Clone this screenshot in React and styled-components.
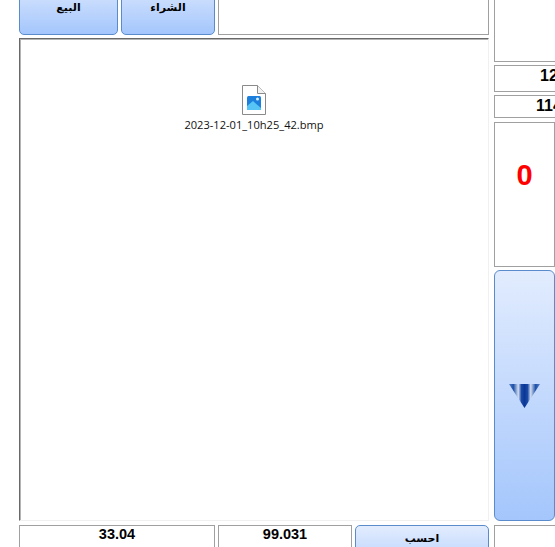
import React from "react"
import styled, { createGlobalStyle } from "styled-components"

const Global = createGlobalStyle`
    html, body {
        margin: 0;
        padding: 0;
        background: #ffffff;
        overflow: hidden;
    }
    * {
        box-sizing: border-box;
    }
`
const Viewport = styled.div`
    width: 555px;
    height: 547px;
    overflow: hidden;
`
const Page = styled.div`
    display: grid;
    grid-template-columns: 470px 61px;
    column-gap: 5px;
    margin-top: -25px;
    padding-left: 19px;
    font-family: "Liberation Sans", Arial, sans-serif;
`
const LeftColumn = styled.div`
    display: flex;
    flex-direction: column;
`
const RightColumn = styled.div`
    display: flex;
    flex-direction: column;
    width: 61px;
`
const TopRow = styled.div`
    display: grid;
    grid-template-columns: 99px 94px 271px;
    column-gap: 3px;
    height: 60px;
`
const BottomRow = styled.div`
    display: grid;
    grid-template-columns: 196px 134px 134px;
    column-gap: 3px;
    height: 60px;
    margin-top: 4px;
`
const GlossButton = styled.button`
    display: flex;
    justify-content: center;
    align-items: flex-start;
    padding: ${(p) => p.$pad || 0}px 0 0;
    border: 1px solid #5a8ccb;
    border-radius: 5px;
    background: linear-gradient(#e2ecfe, #a4c6fc);
    color: #000000;
    font-family: "DejaVu Sans", "Noto Sans", sans-serif;
    font-size: 11px;
    font-weight: 700;
    line-height: 16px;
`
const Cell = styled.div`
    border: 1px solid #a0a0a0;
    background: #ffffff;
    text-align: center;
    font-weight: 700;
    color: #000000;
`
const ValueCell = styled(Cell)`
    font-size: 14.5px;
    line-height: 17px;
`
const Desktop = styled.div`
    display: flex;
    justify-content: center;
    height: 483px;
    margin-top: 3px;
    padding: 46px 0 0 0;
    border-style: solid;
    border-width: 1px;
    border-color: #696969 #f0f0f0 #f0f0f0 #696969;
    box-shadow: inset 1px 1px 0 #b4b4b4;
    background: #ffffff;
`
const FileItem = styled.div`
    display: flex;
    flex-direction: column;
    align-items: center;
    gap: 2px;
    height: 60px;
`
const FileName = styled.span`
    font-family: "Open Sans", "Noto Sans", sans-serif;
    font-size: 11.1px;
    line-height: 15px;
    color: #111111;
    white-space: nowrap;
`
const SideBox = styled.div`
    flex: none;
    width: ${(p) => p.$w || 110}px;
    height: ${(p) => p.$h}px;
    margin-top: ${(p) => p.$gap || 0}px;
    border: 1px solid #a0a0a0;
    background: #ffffff;
    text-align: center;
    font-size: 16px;
    font-weight: 700;
    line-height: 20px;
    color: #000000;
`
const ZeroBox = styled(SideBox)`
    display: flex;
    justify-content: center;
    align-items: center;
    padding-bottom: 39px;
    font-size: 29px;
    color: #ff0000;
`
const DownButton = styled.button`
    flex: none;
    display: flex;
    justify-content: center;
    align-items: flex-start;
    width: 61px;
    height: 251px;
    margin-top: 3px;
    padding: 113px 0 0;
    border: 1px solid #5a8ccb;
    border-radius: 6px;
    background: linear-gradient(#e2ecfe, #a4c6fc);
`

const FileIcon = () => (
    <svg width="24" height="30" viewBox="0 0 24 30">
        <path d="M0.5 0.5H15.5L23.5 8.5V29.5H0.5Z" fill="#ffffff" stroke="#8a8a8a" />
        <path d="M15.5 0.5V8.5H23.5" fill="#f2f2f2" stroke="#8a8a8a" />
        <rect x="5" y="11" width="14" height="14" rx="1.5" fill="#1c7fdc" />
        <path d="M5 25V21L11 16L19 23V25Z" fill="#56c4f5" />
        <circle cx="15.5" cy="14" r="1.5" fill="#d8eefc" />
    </svg>
)

const DownArrow = () => (
    <svg width="31" height="24" viewBox="0 0 31 24">
        <defs>
            <linearGradient id="arrowStripes" x1="0" x2="1" y1="0" y2="0">
                <stop offset="0" stopColor="#5a82cc" />
                <stop offset="0.14" stopColor="#1c4fa8" />
                <stop offset="0.3" stopColor="#d4dff2" />
                <stop offset="0.4" stopColor="#1a4aa6" />
                <stop offset="0.5" stopColor="#0c3796" />
                <stop offset="0.6" stopColor="#1a4aa6" />
                <stop offset="0.7" stopColor="#d4dff2" />
                <stop offset="0.86" stopColor="#1c4fa8" />
                <stop offset="1" stopColor="#5a82cc" />
            </linearGradient>
        </defs>
        <path d="M0 0H31L15.5 24Z" fill="url(#arrowStripes)" />
    </svg>
)

const App = () => {
    return (
        <Viewport>
            <Global />
            <Page>
                <LeftColumn>
                    <TopRow>
                        <GlossButton $pad={24}>البيع</GlossButton>
                        <GlossButton $pad={24}>الشراء</GlossButton>
                        <Cell />
                    </TopRow>
                    <Desktop>
                        <FileItem>
                            <FileIcon />
                            <FileName>2023-12-01_10h25_42.bmp</FileName>
                        </FileItem>
                    </Desktop>
                    <BottomRow>
                        <ValueCell>33.04</ValueCell>
                        <ValueCell>99.031</ValueCell>
                        <GlossButton $pad={5}>احسب</GlossButton>
                    </BottomRow>
                </LeftColumn>
                <RightColumn>
                    <SideBox $h={87} />
                    <SideBox $h={27} $gap={3}>12</SideBox>
                    <SideBox $h={23} $gap={3}>114</SideBox>
                    <ZeroBox $w={61} $h={145} $gap={4}>0</ZeroBox>
                    <DownButton>
                        <DownArrow />
                    </DownButton>
                    <SideBox $h={60} $gap={4} />
                </RightColumn>
            </Page>
        </Viewport>
    )
}

export default App
